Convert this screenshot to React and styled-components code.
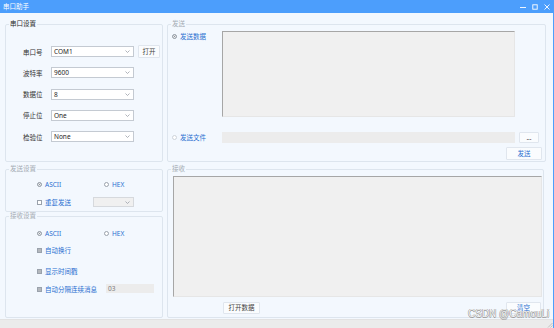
import React from "react";
import styled, { createGlobalStyle } from "styled-components";

const GlobalStyle = createGlobalStyle`
  html, body { margin: 0; padding: 0; }
  body { font-family: "Noto Sans", "Noto Sans CJK SC", sans-serif; background: #fff; }
  * { box-sizing: border-box; }
`;

const Chevron = () => (
  <svg width="5" height="3" viewBox="0 0 5 3">
    <path d="M0.5 0.5 L2.5 2.5 L4.5 0.5" fill="none" stroke="#9aa0a8" strokeWidth="0.8" />
  </svg>
);

const App = () => {
  return (
    <Window>
      <GlobalStyle />
      <TitleBar>
        <span>串口助手</span>
        <Controls>
          <svg width="6" height="6" viewBox="0 0 6 6">
            <path d="M0 3.5 H6" stroke="#fff" strokeWidth="0.9" />
          </svg>
          <svg width="6" height="6" viewBox="0 0 6 6">
            <rect x="0.8" y="0.8" width="4.4" height="4.4" fill="none" stroke="#fff" strokeWidth="0.9" />
          </svg>
          <svg width="6" height="6" viewBox="0 0 6 6">
            <path d="M0.5 0.5 L5.5 5.5 M5.5 0.5 L0.5 5.5" stroke="#fff" strokeWidth="0.9" />
          </svg>
        </Controls>
      </TitleBar>

      <Main>
        <Row $h={142}>
          <Group $w={158}>
            <Legend>串口设置</Legend>
            <SerialGrid>
              <Label>串口号</Label>
              <Combo>COM1<Chevron /></Combo>
              <Button $w={22} $h={13}>打开</Button>
              <Label>波特率</Label>
              <Combo>9600<Chevron /></Combo>
              <span />
              <Label>数据位</Label>
              <Combo>8<Chevron /></Combo>
              <span />
              <Label>停止位</Label>
              <Combo>One<Chevron /></Combo>
              <span />
              <Label>检验位</Label>
              <Combo>None<Chevron /></Combo>
              <span />
            </SerialGrid>
          </Group>

          <Group $w={379}>
            <Legend $dim>发送</Legend>
            <SendBody>
              <Line>
                <Option $w={50}><Radio $on />发送数据</Option>
                <TextBox $w={293} $h={86} />
              </Line>
              <Line $mt={15}>
                <Option $w={50}><Radio $faint />发送文件</Option>
                <Field $w={293} $h={11} />
                <Button $w={20} $h={11} $ml={4}>...</Button>
              </Line>
              <Line $mt={4} $end>
                <Button $w={36} $h={13} $accent>发送</Button>
              </Line>
            </SendBody>
          </Group>
        </Row>

        <Row $h={153}>
          <Column>
            <Group $w={158} $h={47}>
              <Legend $dim>发送设置</Legend>
              <OptionsBody $pt={6}>
                <Line>
                  <Option $w={67}><Radio $on />ASCII</Option>
                  <Option><Radio />HEX</Option>
                </Line>
                <Line $mt={8}>
                  <Option $w={56}><Check />重复发送</Option>
                  <Combo $disabled $w={41} $h={10}><span /><Chevron /></Combo>
                </Line>
              </OptionsBody>
            </Group>
            <Group $w={158} $h={106}>
              <Legend $dim>接收设置</Legend>
              <OptionsBody $pt={8}>
                <Line>
                  <Option $w={67}><Radio $on />ASCII</Option>
                  <Option><Radio />HEX</Option>
                </Line>
                <Line $mt={7}>
                  <Option><Check $on />自动换行</Option>
                </Line>
                <Line $mt={11}>
                  <Option><Check $on />显示时间戳</Option>
                </Line>
                <Line $mt={8}>
                  <Option $w={69}><Check $on />自动分隔连续消息</Option>
                  <Field $w={48} $h={9}>03</Field>
                </Line>
              </OptionsBody>
            </Group>
          </Column>

          <Group $w={377}>
            <Legend $dim>接收</Legend>
            <ReceiveBody>
              <TextBox $h={121} />
              <ButtonRow>
                <Button $w={37} $h={12}>打开数据</Button>
                <Button $w={35} $h={12} $accent>清空</Button>
              </ButtonRow>
            </ReceiveBody>
          </Group>
        </Row>
      </Main>

      <StatusBar>
        <Grip>
          <svg width="6" height="6" viewBox="0 0 6 6">
            <path d="M5.5 1 L1 5.5 M5.5 3.5 L3.5 5.5" stroke="#b0b0b0" strokeWidth="0.7" />
          </svg>
        </Grip>
      </StatusBar>

      <Watermark>CSDN @CamouLi</Watermark>
    </Window>
  );
};

export default App;

const Window = styled.div`
  position: relative;
  width: 554px;
  height: 328px;
  display: flex;
  flex-direction: column;
  background: #f3f8fe;
  border-right: 1px solid #4d9ffc;
  overflow: hidden;
`;

const TitleBar = styled.div`
  height: 13px;
  flex: none;
  display: flex;
  align-items: center;
  justify-content: space-between;
  padding: 0 3px 0 3px;
  background: #4c9efc;
  color: #fff;
  font-size: 6.5px;
  line-height: 8px;
`;

const Controls = styled.div`
  display: flex;
  align-items: center;
  gap: 6px;
  svg {
    display: block;
  }
`;

const Main = styled.div`
  flex: 1;
  display: flex;
  flex-direction: column;
  gap: 3px;
  padding: 7px 7px 1px 5px;
`;

const Row = styled.div`
  display: flex;
  gap: 4px;
  height: ${(p) => p.$h}px;
`;

const Column = styled.div`
  display: flex;
  flex-direction: column;
`;

const Group = styled.fieldset`
  margin: 0;
  padding: 0;
  min-width: 0;
  width: ${(p) => p.$w}px;
  height: ${(p) => (p.$h ? `${p.$h}px` : "100%")};
  border: 1px solid #dde5ee;
  border-radius: 2px;
`;

const Legend = styled.legend`
  margin-left: 3px;
  padding: 0 1px;
  font-size: 6.5px;
  line-height: 8px;
  color: ${(p) => (p.$dim ? "#a4abb3" : "#2b2b2b")};
`;

const SerialGrid = styled.div`
  display: grid;
  grid-template-columns: 24px 83px 22px;
  column-gap: 4px;
  grid-auto-rows: 11px;
  row-gap: 10.3px;
  align-items: center;
  padding: 18px 0 0 17px;
`;

const Label = styled.span`
  font-size: 6.5px;
  color: #333;
  white-space: nowrap;
`;

const Combo = styled.div`
  flex: none;
  width: ${(p) => (p.$w ? `${p.$w}px` : "auto")};
  height: ${(p) => p.$h || 11}px;
  display: flex;
  align-items: center;
  justify-content: space-between;
  padding: 0 3px 0 2px;
  background: ${(p) => (p.$disabled ? "#f0f0f0" : "#fff")};
  border: 1px solid ${(p) => (p.$disabled ? "#d6d9dd" : "#c4cad2")};
  font-size: 6.5px;
  color: #1e1e1e;
  svg {
    display: block;
  }
`;

const Button = styled.button`
  flex: none;
  width: ${(p) => p.$w}px;
  height: ${(p) => p.$h}px;
  margin-left: ${(p) => p.$ml || 0}px;
  padding: 0;
  font-family: inherit;
  font-size: 6.5px;
  line-height: 8px;
  background: #fafcfe;
  border: 1px solid #e0e6ee;
  border-radius: 1px;
  color: ${(p) => (p.$accent ? "#2a6fd0" : "#444")};
`;

const SendBody = styled.div`
  display: flex;
  flex-direction: column;
  padding: 3px 3px 0 4px;
`;

const OptionsBody = styled.div`
  display: flex;
  flex-direction: column;
  padding: ${(p) => p.$pt}px 0 0 31px;
`;

const ReceiveBody = styled.div`
  display: flex;
  flex-direction: column;
  padding: 3px 1px 0 5px;
`;

const Line = styled.div`
  display: flex;
  align-items: ${(p) => (p.$end ? "center" : "flex-start")};
  justify-content: ${(p) => (p.$end ? "flex-end" : "flex-start")};
  margin-top: ${(p) => p.$mt || 0}px;
`;

const Option = styled.label`
  flex: none;
  width: ${(p) => (p.$w ? `${p.$w}px` : "auto")};
  height: 10px;
  display: flex;
  align-items: center;
  gap: 3px;
  font-size: 6.5px;
  color: #2a6fd0;
  white-space: nowrap;
`;

const Radio = styled.span`
  flex: none;
  width: 5px;
  height: 5px;
  border-radius: 50%;
  border: 1px solid ${(p) => (p.$faint ? "#cdd3da" : "#9aa2ac")};
  background: ${(p) => (p.$on ? "#8c939b" : "#fff")};
  box-shadow: ${(p) => (p.$on ? "inset 0 0 0 0.8px #fff" : "none")};
`;

const Check = styled.span`
  flex: none;
  width: 5px;
  height: 5px;
  border: 1px solid #9aa2ac;
  background: ${(p) => (p.$on ? "#b4b8bd" : "#fff")};
`;

const TextBox = styled.div`
  flex: none;
  width: ${(p) => (p.$w ? `${p.$w}px` : "auto")};
  height: ${(p) => p.$h}px;
  background: #f0f0f0;
  border-top: 1px solid #a6a6a6;
  border-left: 1px solid #a6a6a6;
  border-right: 1px solid #e6e6e6;
  border-bottom: 1px solid #e6e6e6;
`;

const Field = styled.div`
  flex: none;
  width: ${(p) => p.$w}px;
  height: ${(p) => p.$h}px;
  display: flex;
  align-items: center;
  padding-left: 2px;
  background: #ececec;
  font-size: 6.5px;
  color: #7a7a7a;
`;

const ButtonRow = styled.div`
  display: flex;
  justify-content: space-between;
  margin-top: 5px;
  padding: 0 1px 0 50px;
`;

const StatusBar = styled.div`
  height: 9px;
  flex: none;
  display: flex;
  justify-content: flex-end;
  align-items: flex-end;
  background: #ebebeb;
  border-top: 1px solid #e2e2e2;
`;

const Grip = styled.div`
  svg {
    display: block;
  }
`;

const Watermark = styled.div`
  position: absolute;
  left: 468px;
  top: 308px;
  font-family: "Liberation Sans", Arial, sans-serif;
  font-size: 10px;
  line-height: 12px;
  color: #f4f4f4;
  text-shadow: 0.5px 0 0 #9c9c9c, -0.5px 0 0 #9c9c9c, 0 0.5px 0 #9c9c9c, 0 -0.5px 0 #9c9c9c;
  white-space: nowrap;
  pointer-events: none;
`;
